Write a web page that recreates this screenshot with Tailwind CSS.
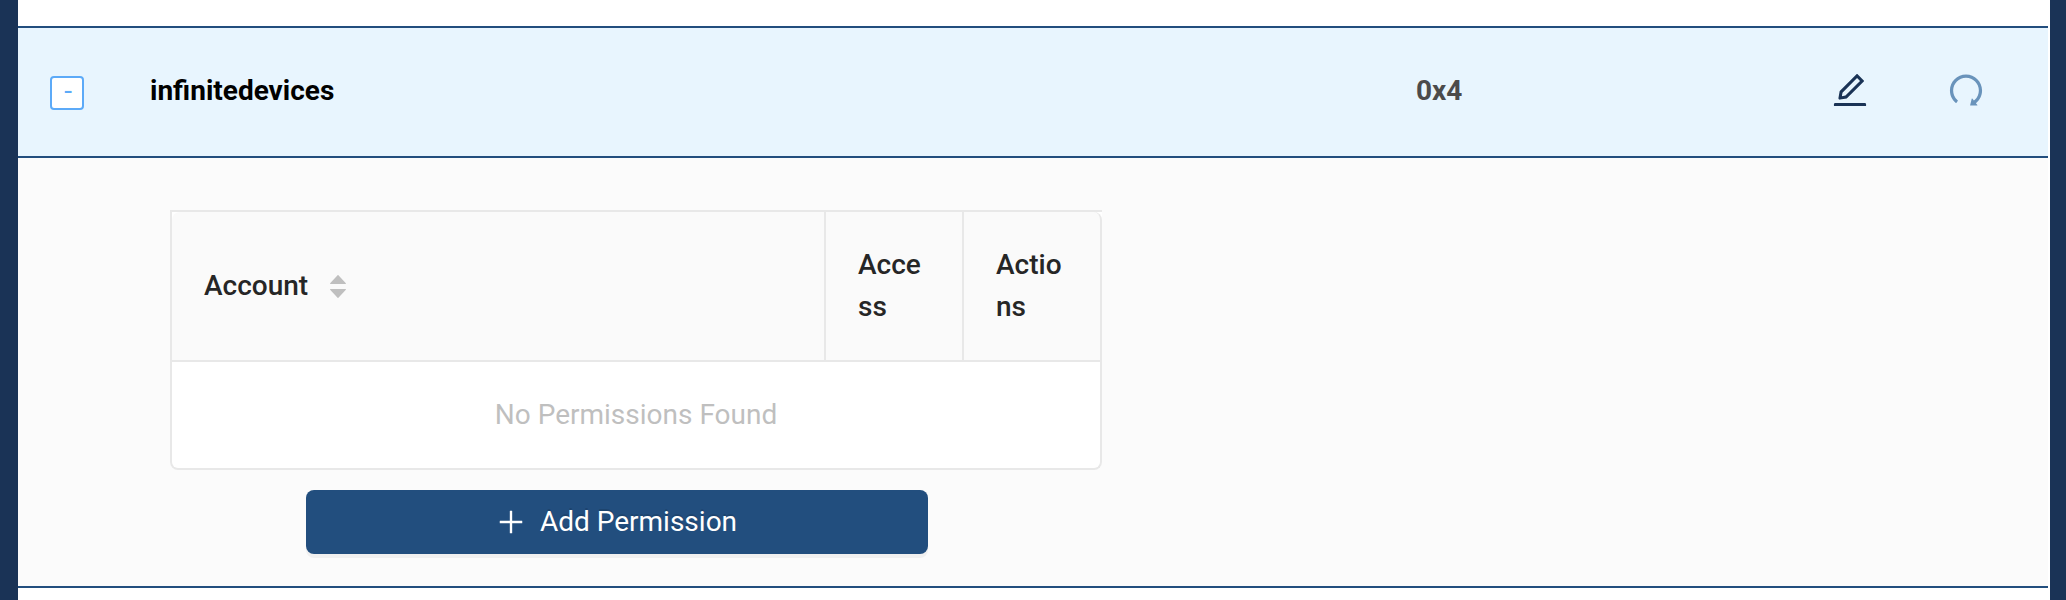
<!DOCTYPE html>
<html lang="en">
<head>
<meta charset="utf-8">
<title>Devices</title>
<script src="https://cdn.jsdelivr.net/npm/@tailwindcss/browser@4"></script>
</head>
<body class="h-[600px] w-[2066px] overflow-hidden bg-[#1a3356] font-['Roboto',sans-serif] text-[28px] leading-[42px] text-black">
<main class="ml-[18px] flex h-full w-[2032px] flex-col bg-white pt-[26px] pr-[2px]">
  <!-- Device row -->
  <div class="flex h-[132px] items-center border-y-2 border-[#224e7e] bg-[#e8f5fe]">
    <div class="w-[132px] pt-[2px] pl-8">
      <button class="flex size-[34px] items-center justify-center rounded-[4px] border-2 border-[#5caaf8] bg-white pb-[5px] pl-[2px] text-[28px] leading-none text-[#5caaf8]">-</button>
    </div>
    <div class="w-[1266px] pb-[2px] font-bold">infinitedevices</div>
    <div class="w-[416px] pb-[2px] font-bold text-[#4b4b4b]">0x4</div>
    <div class="flex gap-20 pb-1">
      <svg class="size-9 text-[#1a3356]" viewBox="64 64 896 896" fill="currentColor"><path d="M257.7 752c2 0 4-.2 6-.5L431.9 722c2-.4 3.9-1.3 5.3-2.8l423.9-423.9a9.96 9.96 0 000-14.1L694.9 114.9c-1.9-1.9-4.4-2.9-7.1-2.9s-5.2 1-7.1 2.9L256.8 538.8c-1.5 1.5-2.4 3.3-2.8 5.3l-29.5 168.2a33.5 33.5 0 009.4 29.8c6.6 6.4 14.9 9.9 23.8 9.9zm67.4-174.4L687.8 215l73.3 73.3-362.7 362.6-88.9 15.7 15.6-89zM880 836H144c-17.7 0-32 14.3-32 32v36c0 4.4 3.6 8 8 8h784c4.4 0 8-3.6 8-8v-36c0-17.7-14.3-32-32-32z"/></svg>
      <svg class="size-9 -scale-x-100 text-[#6993bb]" viewBox="64 64 896 896" fill="currentColor"><path d="M511.4 124C290.5 124.3 112 303 112 523.9c0 128 60.2 242 153.8 315.2l-37.5 48c-4.1 5.3-.3 13 6.3 12.9l167-.8c5.2 0 9-4.9 7.7-9.9L369.8 727a8 8 0 00-14.1-3L315 776.1c-10.2-8-20-16.7-29.3-26a318.64 318.64 0 01-68.6-101.7C200.4 609 192 567.1 192 523.9s8.4-85.1 25.1-124.5c16.1-38.1 39.2-72.3 68.6-101.7 29.4-29.4 63.6-52.5 101.7-68.6C426.9 212.4 468.8 204 512 204s85.1 8.4 124.5 25.1c38.1 16.1 72.3 39.2 101.7 68.6 29.4 29.4 52.5 63.6 68.6 101.7 16.7 39.4 25.1 81.3 25.1 124.5s-8.4 85.1-25.1 124.5a318.64 318.64 0 01-68.6 101.7c-7.5 7.5-15.3 14.5-23.4 21.2a7.93 7.93 0 00-1.2 11.1l39.4 50.5c2.8 3.5 7.9 4.1 11.4 1.3C854.5 760.8 912 649.1 912 523.9c0-221.1-179.4-400.2-400.6-399.9z"/></svg>
    </div>
  </div>
  <!-- Expanded permissions panel -->
  <section class="h-[430px] border-b-2 border-[#224e7e] bg-[#fbfbfb] pt-[52px] pl-[152px]">
    <div class="w-[932px] rounded-b-[8px] border-t-2 border-[#e8e8e8] bg-white">
      <div class="flex h-[150px] font-medium text-[#262626]">
        <div class="w-[656px] border-r-2 border-b-2 border-l-2 border-[#e8e8e8]">
          <div class="flex h-full items-center gap-[22px] rounded-tl-[8px] bg-[#fafafa] pb-px pl-8">
            <span>Account</span>
            <span class="flex flex-col gap-[5px] pt-[2px] text-[#bfbfbf]">
              <svg class="h-[9px] w-4" viewBox="160 300 704 424" preserveAspectRatio="none" fill="currentColor"><path d="M858.9 689L530.5 308.2c-9.4-10.9-27.5-10.9-37 0L165.1 689c-12.2 14.2-1.2 35 18.5 35h656.8c19.7 0 30.7-20.8 18.5-35z"/></svg>
              <svg class="h-[9px] w-4" viewBox="160 300 704 424" preserveAspectRatio="none" fill="currentColor"><path d="M840.4 300H183.6c-19.7 0-30.7 20.8-18.5 35l328.4 380.8c9.4 10.9 27.5 10.9 37 0L858.9 335c12.2-14.2 1.2-35-18.5-35z"/></svg>
            </span>
          </div>
        </div>
        <div class="w-[138px] border-r-2 border-b-2 border-[#e8e8e8] bg-[#fafafa] px-8 py-8 break-all">Acce<br>ss</div>
        <div class="w-[138px] rounded-tr-[8px] border-r-2 border-b-2 border-[#e8e8e8] bg-[#fafafa] py-8 pl-8 break-all">Actio<br>ns</div>
      </div>
      <div class="h-[108px] rounded-b-[8px] border-x-2 border-b-2 border-[#e8e8e8] py-8 text-center text-[#bfbfbf]">No Permissions Found</div>
    </div>
    <button class="mt-5 ml-[136px] flex h-16 w-[622px] items-center justify-center gap-[15px] rounded-[8px] bg-[#224e7e] text-white shadow-[0_4px_0_rgba(0,0,0,0.045)] [text-shadow:0_-2px_0_rgba(0,0,0,0.12)]">
      <svg class="size-7" viewBox="64 64 896 896" fill="currentColor"><path d="M482 152h60q8 0 8 8v704q0 8-8 8h-60q-8 0-8-8V160q0-8 8-8z"/><path d="M160 474h704q8 0 8 8v60q0 8-8 8H160q-8 0-8-8v-60q0-8 8-8z"/></svg>
      <span>Add Permission</span>
    </button>
  </section>
</main>
</body>
</html>
